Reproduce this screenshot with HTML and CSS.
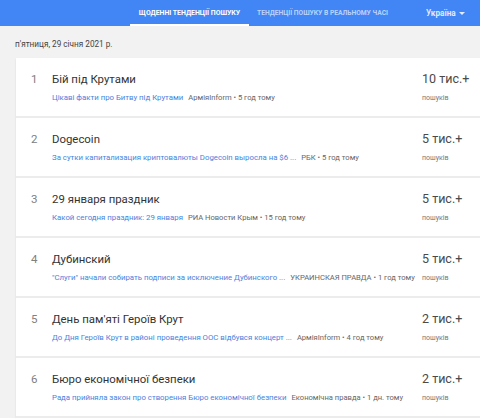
FILE: index.html
```html
<!DOCTYPE html>
<html>
  <head>
    <meta charset="utf-8">
    <title>Тенденції пошуку</title>
    <link rel="stylesheet" href="styles.css">
  </head>
  <body>
    <div id="header">
      <div class="tab active">ЩОДЕННІ ТЕНДЕНЦІЇ ПОШУКУ</div>
      <div class="tab">ТЕНДЕНЦІЇ ПОШУКУ В РЕАЛЬНОМУ ЧАСІ</div>
      <div id="geo">Україна <span class="arrow"></span></div>
    </div>
    <div id="date">п'ятниця, 29 січня 2021 р.</div>
    <div id="feed">
      <div class="item">
        <div class="index">1</div>
        <div class="details">
          <div class="title">Бій під Крутами</div>
          <div class="summary"><span class="link">Цікаві факти про Битву під Крутами</span><span class="source">АрміяInform • 5 год тому</span></div>
        </div>
        <div class="count">
          <div class="num">10 тис.+</div>
          <div class="label">пошуків</div>
        </div>
      </div>
      <div class="item">
        <div class="index">2</div>
        <div class="details">
          <div class="title">Dogecoin</div>
          <div class="summary"><span class="link">За сутки капитализация криптовалюты Dogecoin выросла на $6 ...</span><span class="source">РБК • 5 год тому</span></div>
        </div>
        <div class="count">
          <div class="num">5 тис.+</div>
          <div class="label">пошуків</div>
        </div>
      </div>
      <div class="item">
        <div class="index">3</div>
        <div class="details">
          <div class="title">29 января праздник</div>
          <div class="summary"><span class="link">Какой сегодня праздник: 29 января</span><span class="source">РИА Новости Крым • 15 год тому</span></div>
        </div>
        <div class="count">
          <div class="num">5 тис.+</div>
          <div class="label">пошуків</div>
        </div>
      </div>
      <div class="item">
        <div class="index">4</div>
        <div class="details">
          <div class="title">Дубинский</div>
          <div class="summary"><span class="link">"Слуги" начали собирать подписи за исключение Дубинского ...</span><span class="source">УКРАИНСКАЯ ПРАВДА • 1 год тому</span></div>
        </div>
        <div class="count">
          <div class="num">5 тис.+</div>
          <div class="label">пошуків</div>
        </div>
      </div>
      <div class="item">
        <div class="index">5</div>
        <div class="details">
          <div class="title">День пам'яті Героїв Крут</div>
          <div class="summary"><span class="link">До Дня Героїв Крут в районі проведення ООС відбувся концерт ...</span><span class="source">АрміяInform • 4 год тому</span></div>
        </div>
        <div class="count">
          <div class="num">2 тис.+</div>
          <div class="label">пошуків</div>
        </div>
      </div>
      <div class="item">
        <div class="index">6</div>
        <div class="details">
          <div class="title">Бюро економічної безпеки</div>
          <div class="summary"><span class="link">Рада прийняла закон про створення Бюро економічної безпеки</span><span class="source">Економічна правда • 1 дн. тому</span></div>
        </div>
        <div class="count">
          <div class="num">2 тис.+</div>
          <div class="label">пошуків</div>
        </div>
      </div>
    </div>
  </body>
</html>
```

FILE: styles.css
```css
* {
    font-family: Roboto, "Liberation Sans", sans-serif;
    box-sizing: border-box;
}

body {
    margin: 0;
    background-color: #f2f2f2;
    overflow: hidden;
}

#header {
    display: flex;
    align-items: stretch;
    height: 26px;
    background-color: #4285f4;
    padding-left: 130px;
}
.tab {
    display: flex;
    align-items: center;
    justify-content: center;
    flex-shrink: 0;
    font-size: 6.7px;
    font-weight: 700;
    color: rgba(255, 255, 255, 0.65);
    padding: 0 8px;
    white-space: nowrap;
}
.tab.active {
    width: 119px;
    font-size: 6.9px;
    color: #fff;
    border-bottom: 2px solid #fff;
    padding-top: 2px;
}
#geo {
    display: flex;
    align-items: center;
    flex-shrink: 0;
    margin-left: 30px;
    font-size: 8.2px;
    font-weight: 700;
    color: rgba(255, 255, 255, 0.85);
}
.arrow {
    display: inline-block;
    margin-left: 3px;
    width: 0;
    height: 0;
    border-left: 3px solid transparent;
    border-right: 3px solid transparent;
    border-top: 3px solid rgba(255, 255, 255, 0.85);
}

#date {
    font-size: 8.2px;
    color: #444;
    padding: 13px 0 0 15px;
    height: 32px;
}

#feed {
    margin-left: 16px;
    background-color: #fff;
    box-shadow: 0 1px 2px rgba(0, 0, 0, 0.1);
}
.item {
    display: flex;
    height: 60px;
    border-bottom: 2px solid #ececec;
}
.index {
    width: 36px;
    padding-top: 14px;
    padding-left: 15px;
    font-size: 11.5px;
    line-height: 14px;
    color: #808080;
}
.details {
    flex: 1;
    padding-top: 14px;
    min-width: 0;
}
.title {
    font-size: 11.4px;
    line-height: 14px;
    color: #333;
    height: 21px;
}
.summary {
    white-space: nowrap;
    font-size: 8px;
    line-height: 10px;
}
.link {
    font-size: 7.8px;
    color: #4a82dc;
    margin-right: 5px;
}
.source {
    font-size: 7.6px;
    color: #666;
}
.count {
    width: 58px;
    padding-top: 13px;
}
.num {
    font-size: 12.5px;
    line-height: 16px;
    color: #4a4a4a;
    height: 22.5px;
}
.label {
    font-size: 7px;
    line-height: 9px;
    color: #777;
}
```
